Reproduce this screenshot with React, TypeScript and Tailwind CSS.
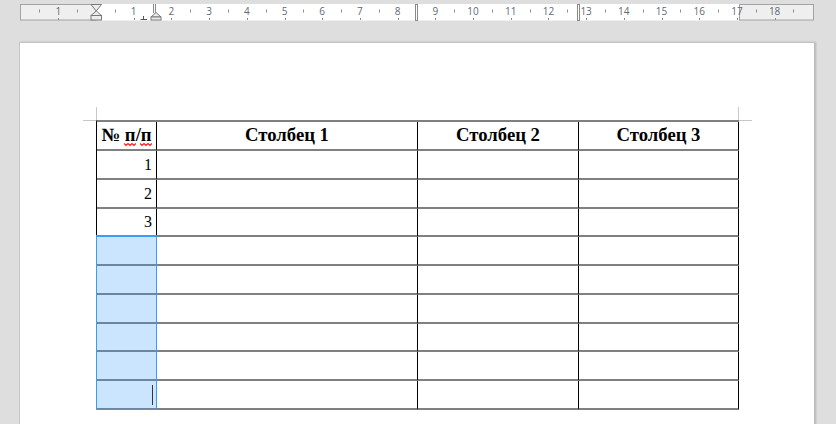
import React from "react";

const S = 37.7;
const ORIGIN = 76; // x of ruler zero inside svg (abs 96)

function Ruler() {
  const nums: number[] = [-1, 1, 2, 3, 4, 5, 6, 7, 8, 9, 10, 11, 12, 13, 14, 15, 16, 17, 18];
  const halves: number[] = [];
  for (let k = -2; k <= 18; k++) halves.push(k + 0.5);
  return (
    <svg width="796" height="17" viewBox="0 0 796 17" className="block">
      <rect x="76" y="0" width="643" height="16.5" fill="#ffffff" />
      <rect x="0.5" y="0.5" width="75.5" height="15.5" fill="#efefef" stroke="#a3a3a3" />
      <rect x="719.5" y="0.5" width="74" height="15.5" fill="#efefef" stroke="#a3a3a3" />
      {halves.map((h) => {
        const x = Math.round(ORIGIN + h * S) + 0.5;
        if (x < 1 || x > 793) return null;
        return <line key={"h" + h} x1={x} x2={x} y1={5.5} y2={8.5} stroke="#8c8c8c" strokeWidth="1" />;
      })}
      {nums.map((n) => {
        const x = ORIGIN + n * S;
        return (
          <g key={"n" + n}>
            <text
              x={x}
              y={10.5}
              textAnchor="middle"
              fontSize="10"
              fontFamily="'Open Sans', 'DejaVu Sans', sans-serif"
              fill="#5f6a75"
            >
              {Math.abs(n)}
            </text>
            <line x1={Math.round(x) + 0.5} x2={Math.round(x) + 0.5} y1={14} y2={16} stroke="#8c8c8c" />
          </g>
        );
      })}
      {/* column markers */}
      <rect x="395.5" y="0" width="2" height="16.5" fill="#ffffff" stroke="#8a8a8a" strokeWidth="1" />
      <rect x="557.5" y="0" width="2" height="16.5" fill="#ffffff" stroke="#8a8a8a" strokeWidth="1" />
      {/* hourglass indent marker */}
      <polygon points="71,0.5 81.5,0.5 76.25,7" fill="#ececec" stroke="#7a7a7a" strokeWidth="1" />
      <polygon points="76.25,7 71,11.5 81.5,11.5" fill="#ececec" stroke="#7a7a7a" strokeWidth="1" />
      <rect x="71" y="11.5" width="10.5" height="4.5" fill="#ececec" stroke="#7a7a7a" strokeWidth="1" />
      {/* cell marker */}
      <line x1="133.5" x2="133.5" y1="0" y2="9" stroke="#8a8a8a" />
      <line x1="135.5" x2="135.5" y1="0" y2="9" stroke="#8a8a8a" />
      <polygon points="136,8.5 131,13 141,13" fill="#ececec" stroke="#7a7a7a" strokeWidth="1" />
      <rect x="131" y="13" width="10" height="3" fill="#ececec" stroke="#7a7a7a" strokeWidth="1" />
      {/* tab stop */}
      <line x1="123.5" x2="123.5" y1="12" y2="15.5" stroke="#555555" />
      <line x1="120.5" x2="127" y1="15.5" y2="15.5" stroke="#555555" />
    </svg>
  );
}

function Squiggle() {
  return (
    <svg
      className="absolute -left-[1px] top-[100%] -mt-[3px]"
      width="12"
      height="5"
      viewBox="0 0 12 5"
    >
      <path d="M0 1.5 L2 3.5 L4 1.5 L6 3.5 L8 1.5 L10 3.5 L12 1.5" fill="none" stroke="#f01818" strokeWidth="1.1" />
    </svg>
  );
}

const rowHeights = [
  "h-[29px]",
  "h-[29px]",
  "h-[29px]",
  "h-[28px]",
  "h-[29px]",
  "h-[29px]",
  "h-[29px]",
  "h-[28px]",
  "h-[29px]",
  "h-[29px]",
];

const cellBase = "border-r border-r-black border-b-2 border-b-[#808080] flex items-center";

export default function App() {
  const body = ["1", "2", "3", "", "", "", "", "", ""];
  return (
    <div className="w-[836px] h-[424px] overflow-hidden bg-[#dedede] font-['Liberation_Serif',serif]">
      <div className="pt-[4px] pl-[20px]">
        <Ruler />
      </div>
      <div className="ml-[19px] mt-[21px] w-[795px] h-[400px] bg-white border-l border-t border-[#c4c4c4] shadow-[2px_0_2px_rgba(0,0,0,0.18)] pl-[76px] pt-[77px]">
        <div className="relative w-[643px] border-l border-l-black border-t-2 border-t-[#808080] text-black">
          {/* corner marks */}
          <div className="absolute -left-[1px] -top-[15px] w-px h-[13px] bg-[#c8c8c8]" />
          <div className="absolute -left-[14px] -top-[2px] w-[13px] h-px bg-[#c8c8c8]" />
          <div className="absolute left-[641px] -top-[15px] w-px h-[13px] bg-[#c8c8c8]" />
          <div className="absolute left-[642px] -top-[2px] w-[13px] h-px bg-[#c8c8c8]" />

          {/* header */}
          <div className={"flex " + rowHeights[0]}>
            <div className={cellBase + " w-[60px] justify-center text-[18.7px] font-bold"}>
              <span className="whitespace-nowrap">
                №{" "}
                <span className="relative">
                  п<Squiggle />
                </span>
                /
                <span className="relative">
                  п<Squiggle />
                </span>
              </span>
            </div>
            <div className={cellBase + " w-[261px] justify-center text-[18.7px] font-bold"}>Столбец 1</div>
            <div className={cellBase + " w-[161px] justify-center text-[18.7px] font-bold"}>Столбец 2</div>
            <div className={cellBase + " w-[160px] justify-center text-[18.7px] font-bold"}>Столбец 3</div>
          </div>
          {body.map((v, i) => (
            <div key={i} className={"flex " + rowHeights[i + 1]}>
              <div className={cellBase + " w-[60px] justify-end pr-[4px] text-[16px]"}>
                {v}
                {i === 8 ? <span className="block w-px h-[20px] bg-[#2b1a00] mr-[-1px]" /> : null}
              </div>
              <div className={cellBase + " w-[261px]"} />
              <div className={cellBase + " w-[161px]"} />
              <div className={cellBase + " w-[160px]"} />
            </div>
          ))}

          {/* selection overlay */}
          <div className="absolute -left-[1px] top-[113px] w-[61px] h-[175px] bg-[rgba(51,153,255,0.25)] border border-[#3a9bff] border-t-2" />
        </div>
      </div>
    </div>
  );
}
